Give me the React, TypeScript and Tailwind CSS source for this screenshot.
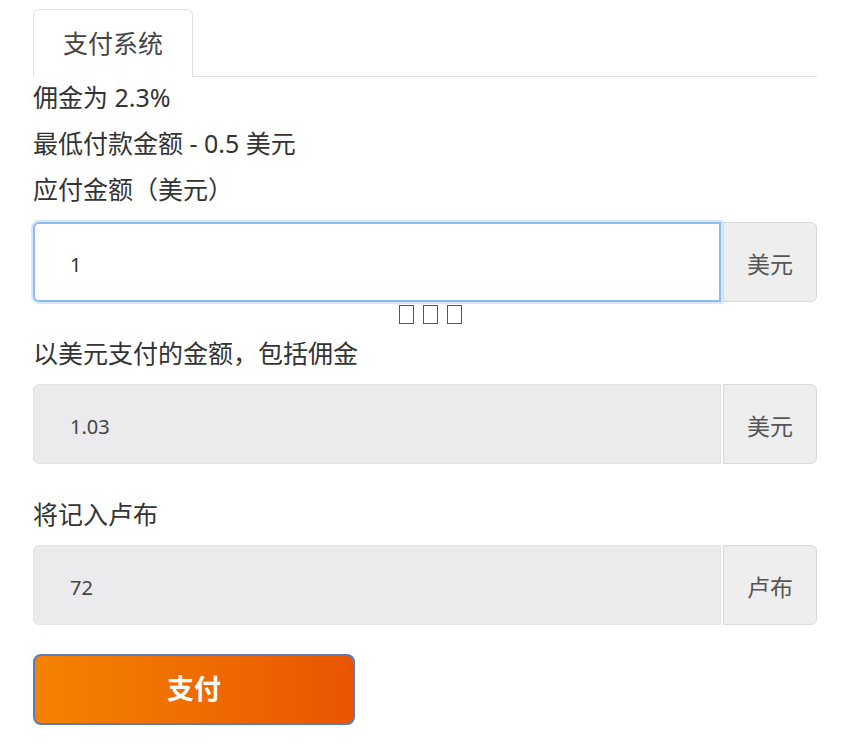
import React from "react";

const font = { fontFamily: '"Noto Sans", "Noto Sans CJK SC", sans-serif' };

function Field({ value, unit, active }: { value: string; unit: string; active?: boolean }) {
  return (
    <div className="flex h-[80px] w-full">
      <div
        className={
          active
            ? "flex flex-1 items-center rounded-l-[6px] border-2 border-[#8fbcf0] bg-white pl-[35px] pt-[6px] shadow-[0_0_0_2px_#d6e6fb] text-[20px] text-[#333]"
            : "flex flex-1 items-center rounded-l-[6px] border border-[#e3e3e6] bg-[#ebebee] pl-[36px] pt-[6px] text-[20px] text-[#444]"
        }
      >
        {value}
      </div>
      <div className="ml-[2px] flex w-[94px] items-center justify-center rounded-r-[6px] border border-[#d9d9d9] bg-[#eeeeee] pt-[4px] text-[23px] text-[#555]">
        {unit}
      </div>
    </div>
  );
}

export default function App() {
  return (
    <div className="h-[745px] w-[849px] bg-white text-[#333]" style={font}>
      <div className="ml-[33px] mr-[32px] pt-[9px]">
        {/* Tabs */}
        <div className="flex border-b border-[#e2e2e2]">
          <div className="-mb-px flex h-[68px] w-[160px] items-center justify-center rounded-t-[6px] border border-b-0 border-[#e2e2e2] bg-white text-[25px] text-[#444]">
            支付系统
          </div>
        </div>

        {/* Info */}
        <div className="-mt-[3px] text-[25px] leading-[46px]">
          <p>佣金为 2.3%</p>
          <p>最低付款金额 - 0.5 美元</p>
          <p>应付金额（美元）</p>
        </div>

        <div className="mt-[10px]">
          <Field value="1" unit="美元" active />
        </div>
        {/* missing glyphs */}
        <div className="flex h-[28px] justify-center gap-[9px] pl-[10px] pt-[3px]" aria-label="□□□">
          <span className="h-[19px] w-[15px] border-[1.5px] border-[#555]" />
          <span className="h-[19px] w-[15px] border-[1.5px] border-[#555]" />
          <span className="h-[19px] w-[15px] border-[1.5px] border-[#555]" />
        </div>

        <p className="text-[25px] leading-[46px]">以美元支付的金额，包括佣金</p>
        <div className="mt-[8px]">
          <Field value="1.03" unit="美元" />
        </div>

        <p className="mt-[27px] text-[25px] leading-[46px]">将记入卢布</p>
        <div className="mt-[8px]">
          <Field value="72" unit="卢布" />
        </div>

        <button className="mt-[29px] flex h-[71px] w-[322px] items-center justify-center rounded-[8px] border-2 border-[#5b7bc0] bg-gradient-to-r from-[#f58200] to-[#e85500] text-[27px] font-bold text-white">
          支付
        </button>
      </div>
    </div>
  );
}
